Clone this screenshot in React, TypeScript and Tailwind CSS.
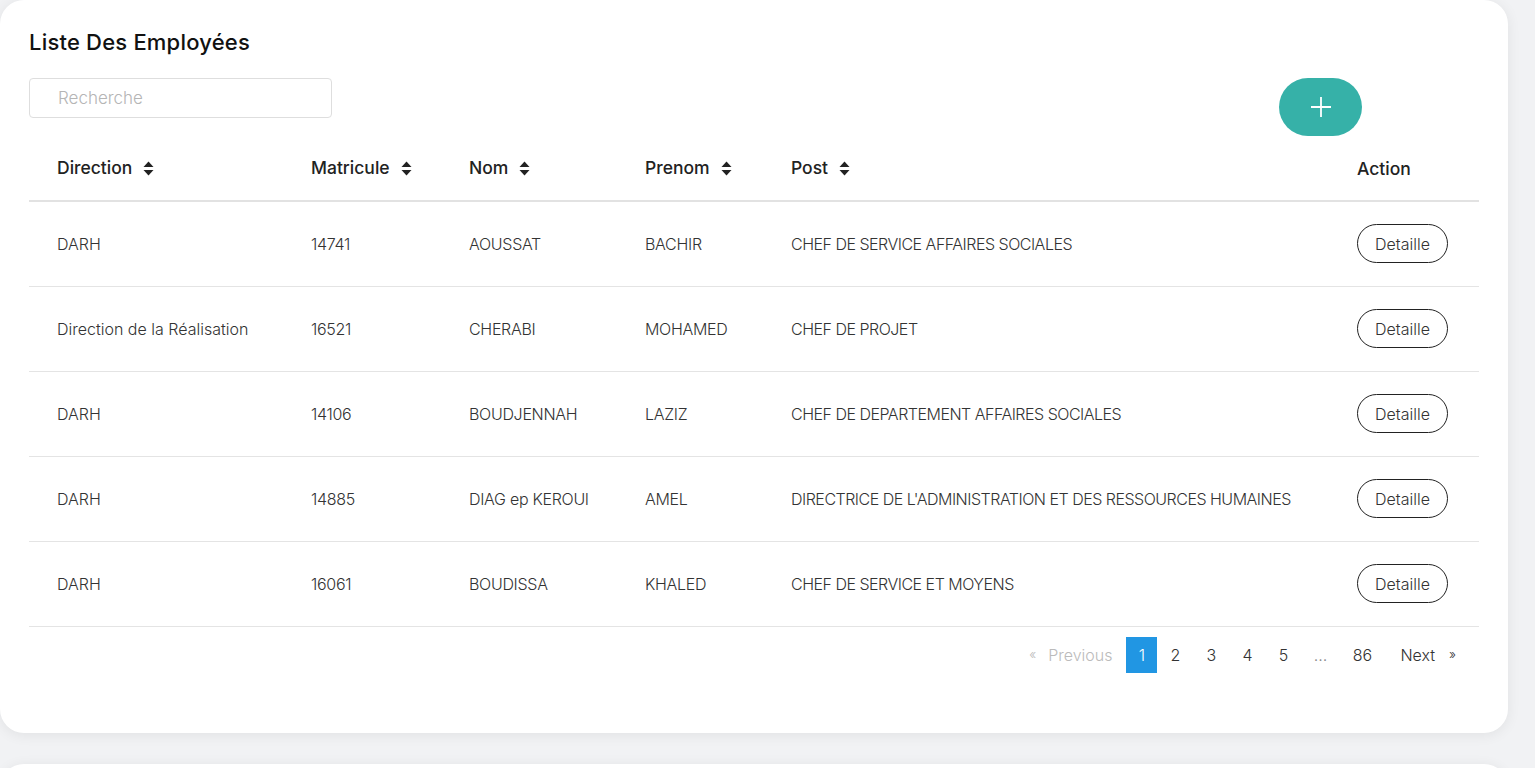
import React from "react";

type Employee = {
  direction: string;
  matricule: string;
  nom: string;
  prenom: string;
  post: string;
};

const employees: Employee[] = [
  { direction: "DARH", matricule: "14741", nom: "AOUSSAT", prenom: "BACHIR", post: "CHEF DE SERVICE AFFAIRES SOCIALES" },
  { direction: "Direction de la Réalisation", matricule: "16521", nom: "CHERABI", prenom: "MOHAMED", post: "CHEF DE PROJET" },
  { direction: "DARH", matricule: "14106", nom: "BOUDJENNAH", prenom: "LAZIZ", post: "CHEF DE DEPARTEMENT AFFAIRES SOCIALES" },
  { direction: "DARH", matricule: "14885", nom: "DIAG ep KEROUI", prenom: "AMEL", post: "DIRECTRICE DE L'ADMINISTRATION ET DES RESSOURCES HUMAINES" },
  { direction: "DARH", matricule: "16061", nom: "BOUDISSA", prenom: "KHALED", post: "CHEF DE SERVICE ET MOYENS" },
];

const SortIcon = () => (
  <svg width="11" height="15" viewBox="0 0 11 15" className="ml-[11px] inline-block">
    <path d="M5.5 0.5 L10.5 6 H0.5 Z" fill="#222" />
    <path d="M5.5 14.5 L10.5 9 H0.5 Z" fill="#222" />
  </svg>
);

const columns = [
  { label: "Direction", sort: true },
  { label: "Matricule", sort: true },
  { label: "Nom", sort: true },
  { label: "Prenom", sort: true },
  { label: "Post", sort: true },
  { label: "Action", sort: false },
];

const Pagination = () => {
  const pages = ["2", "3", "4", "5"];
  return (
    <div className="flex items-center justify-end pr-[23px] pt-[10px] text-[16px] font-light text-[#333]">
      <span className="flex h-[36px] items-center px-[14px] text-[#bbb]">
        <span className="mr-[12px] text-[13px]">«</span>Previous
      </span>
      <span className="flex h-[36px] w-[31px] items-center justify-center bg-[#2196e3] text-white">1</span>
      {pages.map((p) => (
        <span key={p} className="flex h-[36px] w-[36px] items-center justify-center">
          {p}
        </span>
      ))}
      <span className="flex h-[36px] w-[38px] items-center justify-center text-[#888]">…</span>
      <span className="flex h-[36px] w-[46px] items-center justify-center">86</span>
      <span className="flex h-[36px] items-center pl-[15px]">
        Next<span className="ml-[14px] text-[13px]">»</span>
      </span>
    </div>
  );
};

export default function App() {
  return (
    <div
      className="flex min-h-screen flex-col gap-[31px] bg-[#f1f2f4] pr-[27px]"
      style={{ fontFamily: "Inter, 'Noto Sans', sans-serif" }}
    >
      <div className="rounded-[24px] bg-white px-[29px] pb-[60px] pt-[28px] shadow-[0_2px_14px_rgba(0,0,0,0.07)]">
        <h2 className="text-[22px] font-medium leading-[28px] tracking-[0.2px] text-[#111]">Liste Des Employées</h2>

        <div className="mt-[22px] flex items-start justify-between pr-[117px]">
          <input
            placeholder="Recherche"
            className="h-[40px] w-[303px] rounded-[4px] border border-[#dedede] pl-[28px] text-[17px] font-light outline-none placeholder:text-[#b5b5b5]"
          />
          <button className="flex h-[58px] w-[83px] items-center justify-center rounded-full bg-[#36b1a8]">
            <svg width="22" height="22" viewBox="0 0 22 22">
              <path d="M11 1 V21 M1 11 H21" stroke="#fff" strokeWidth="1.8" />
            </svg>
          </button>
        </div>

        <table className="w-full table-fixed border-collapse">
          <colgroup>
            <col className="w-[254px]" />
            <col className="w-[158px]" />
            <col className="w-[176px]" />
            <col className="w-[146px]" />
            <col className="w-[566px]" />
            <col />
          </colgroup>
          <thead>
            <tr className="h-[65px] border-b-2 border-[#e2e2e2]">
              {columns.map((c, i) => (
                <th
                  key={c.label}
                  className={`text-left text-[17.5px] font-medium text-[#222] ${i === 5 ? "pl-[28px] pt-[2px]" : "pl-[28px]"}`}
                >
                  <span className="inline-flex items-center">
                    {c.label}
                    {c.sort && <SortIcon />}
                  </span>
                </th>
              ))}
            </tr>
          </thead>
          <tbody>
            {employees.map((e) => (
              <tr key={e.matricule} className="h-[85px] border-b border-[#e4e4e4] text-[16px] font-light text-[#333]">
                <td className="pl-[28px]">{e.direction}</td>
                <td className="pl-[28px] tracking-[-0.3px]">{e.matricule}</td>
                <td className="pl-[28px] tracking-[-0.3px]">{e.nom}</td>
                <td className="pl-[28px] tracking-[-0.3px]">{e.prenom}</td>
                <td className="whitespace-nowrap pl-[28px] tracking-[-0.5px]">{e.post}</td>
                <td className="pl-[28px]">
                  <button className="h-[39px] w-[91px] rounded-full border border-[#222] text-[16px] font-light text-[#333]">
                    Detaille
                  </button>
                </td>
              </tr>
            ))}
          </tbody>
        </table>

        <Pagination />
      </div>

      <div className="h-[200px] rounded-[24px] bg-white shadow-[0_2px_14px_rgba(0,0,0,0.07)]" />
    </div>
  );
}
